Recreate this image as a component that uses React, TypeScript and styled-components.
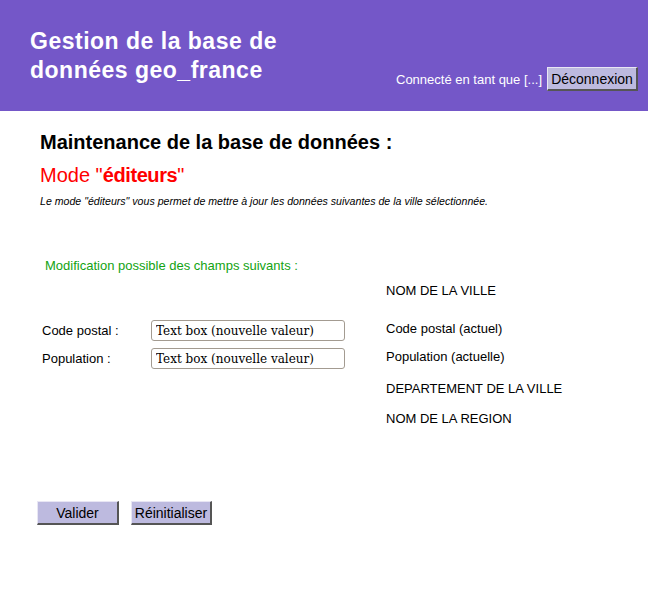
import React from "react";
import styled, { createGlobalStyle } from "styled-components";

const Global = createGlobalStyle`
  html, body { margin: 0; padding: 0; background: #fff; }
  body { font-family: "Liberation Sans", Arial, sans-serif; color: #000; }
`;

const Header = styled.header`
  height: 111px;
  background: #7457c8;
  display: flex;
  justify-content: space-between;
  align-items: flex-end;
  box-sizing: border-box;
  padding: 0 10px 20px 30px;
`;

const Title = styled.h1`
  margin: 0;
  align-self: flex-start;
  padding-top: 27px;
  font-size: 23px;
  letter-spacing: 0.5px;
  line-height: 29px;
  font-weight: bold;
  color: #fff;
`;

const UserBox = styled.div`
  display: flex;
  align-items: center;
  gap: 5px;
`;

const UserText = styled.span`
  font-size: 13px;
  color: #fff;
`;

const Button = styled.button<{ $w: number }>`
  width: ${(p) => p.$w}px;
  height: 24px;
  box-sizing: border-box;
  padding: 0;
  background: #bdbadf;
  border-style: solid;
  border-width: 1px 2px 2px 1px;
  border-color: #e8e6f4 #555 #555 #e8e6f4;
  font-family: "Liberation Sans", Arial, sans-serif;
  font-size: 14px;
  color: #000;
  cursor: pointer;
`;

const Main = styled.main`
  padding: 20px 0 0 40px;
`;

const H2 = styled.h2`
  margin: 0;
  font-size: 20px;
  line-height: 23px;
  font-weight: bold;
`;

const Mode = styled.div`
  margin-top: 10px;
  font-size: 20px;
  line-height: 23px;
  color: #ff0000;
  & b { letter-spacing: -0.4px; }
`;

const Intro = styled.p`
  margin: 8px 0 0;
  font-size: 10.6px;
  font-style: italic;
  line-height: 12px;
`;

const Green = styled.div`
  margin: 51px 0 0 5px;
  font-size: 13px;
  line-height: 15px;
  color: #13a313;
`;

const Form = styled.div`
  margin: 7px 0 0 2px;
  display: grid;
  grid-template-columns: 109px 235px auto;
  align-items: start;
`;

const Row = styled.div<{ $h: number }>`
  display: contents;
  & > * { height: ${(p) => p.$h}px; box-sizing: border-box; }
`;

const Text = styled.div<{ $pt: number }>`
  font-size: 13px;
  line-height: 15px;
  padding-top: ${(p) => p.$pt}px;
`;

const Cell = styled.div`
  padding-top: 2px;
`;

const Input = styled.input`
  width: 194px;
  height: 21px;
  box-sizing: border-box;
  border: 1px solid #a39b91;
  border-radius: 3px;
  padding: 0 4px;
  font-family: "DejaVu Serif", "Liberation Serif", serif;
  font-size: 12px;
  color: #000;
  background: #fff;
`;

const Actions = styled.div`
  margin: 67px 0 0 -3px;
  display: flex;
  gap: 12px;
`;

export default function App() {
  return (
    <>
      <Global />
      <Header>
        <Title>
          Gestion de la base de
          <br />
          données geo_france
        </Title>
        <UserBox>
          <UserText>Connecté en tant que [...]</UserText>
          <Button $w={91}>Déconnexion</Button>
        </UserBox>
      </Header>
      <Main>
        <H2>Maintenance de la base de données :</H2>
        <Mode>
          Mode "<b>éditeurs</b>"
        </Mode>
        <Intro>
          Le mode "éditeurs" vous permet de mettre à jour les données suivantes de la ville sélectionnée.
        </Intro>
        <Green>Modification possible des champs suivants :</Green>
        <Form>
          <Row $h={38}>
            <span />
            <span />
            <Text $pt={3}>NOM DE LA VILLE</Text>
          </Row>
          <Row $h={28}>
            <Text $pt={5}>Code postal :</Text>
            <Cell>
              <Input defaultValue="Text box (nouvelle valeur)" />
            </Cell>
            <Text $pt={3}>Code postal (actuel)</Text>
          </Row>
          <Row $h={28}>
            <Text $pt={5}>Population :</Text>
            <Cell>
              <Input defaultValue="Text box (nouvelle valeur)" />
            </Cell>
            <Text $pt={3}>Population (actuelle)</Text>
          </Row>
          <Row $h={30}>
            <span />
            <span />
            <Text $pt={7}>DEPARTEMENT DE LA VILLE</Text>
          </Row>
          <Row $h={30}>
            <span />
            <span />
            <Text $pt={7}>NOM DE LA REGION</Text>
          </Row>
        </Form>
        <Actions>
          <Button $w={82}>Valider</Button>
          <Button $w={81}>Réinitialiser</Button>
        </Actions>
      </Main>
    </>
  );
}
